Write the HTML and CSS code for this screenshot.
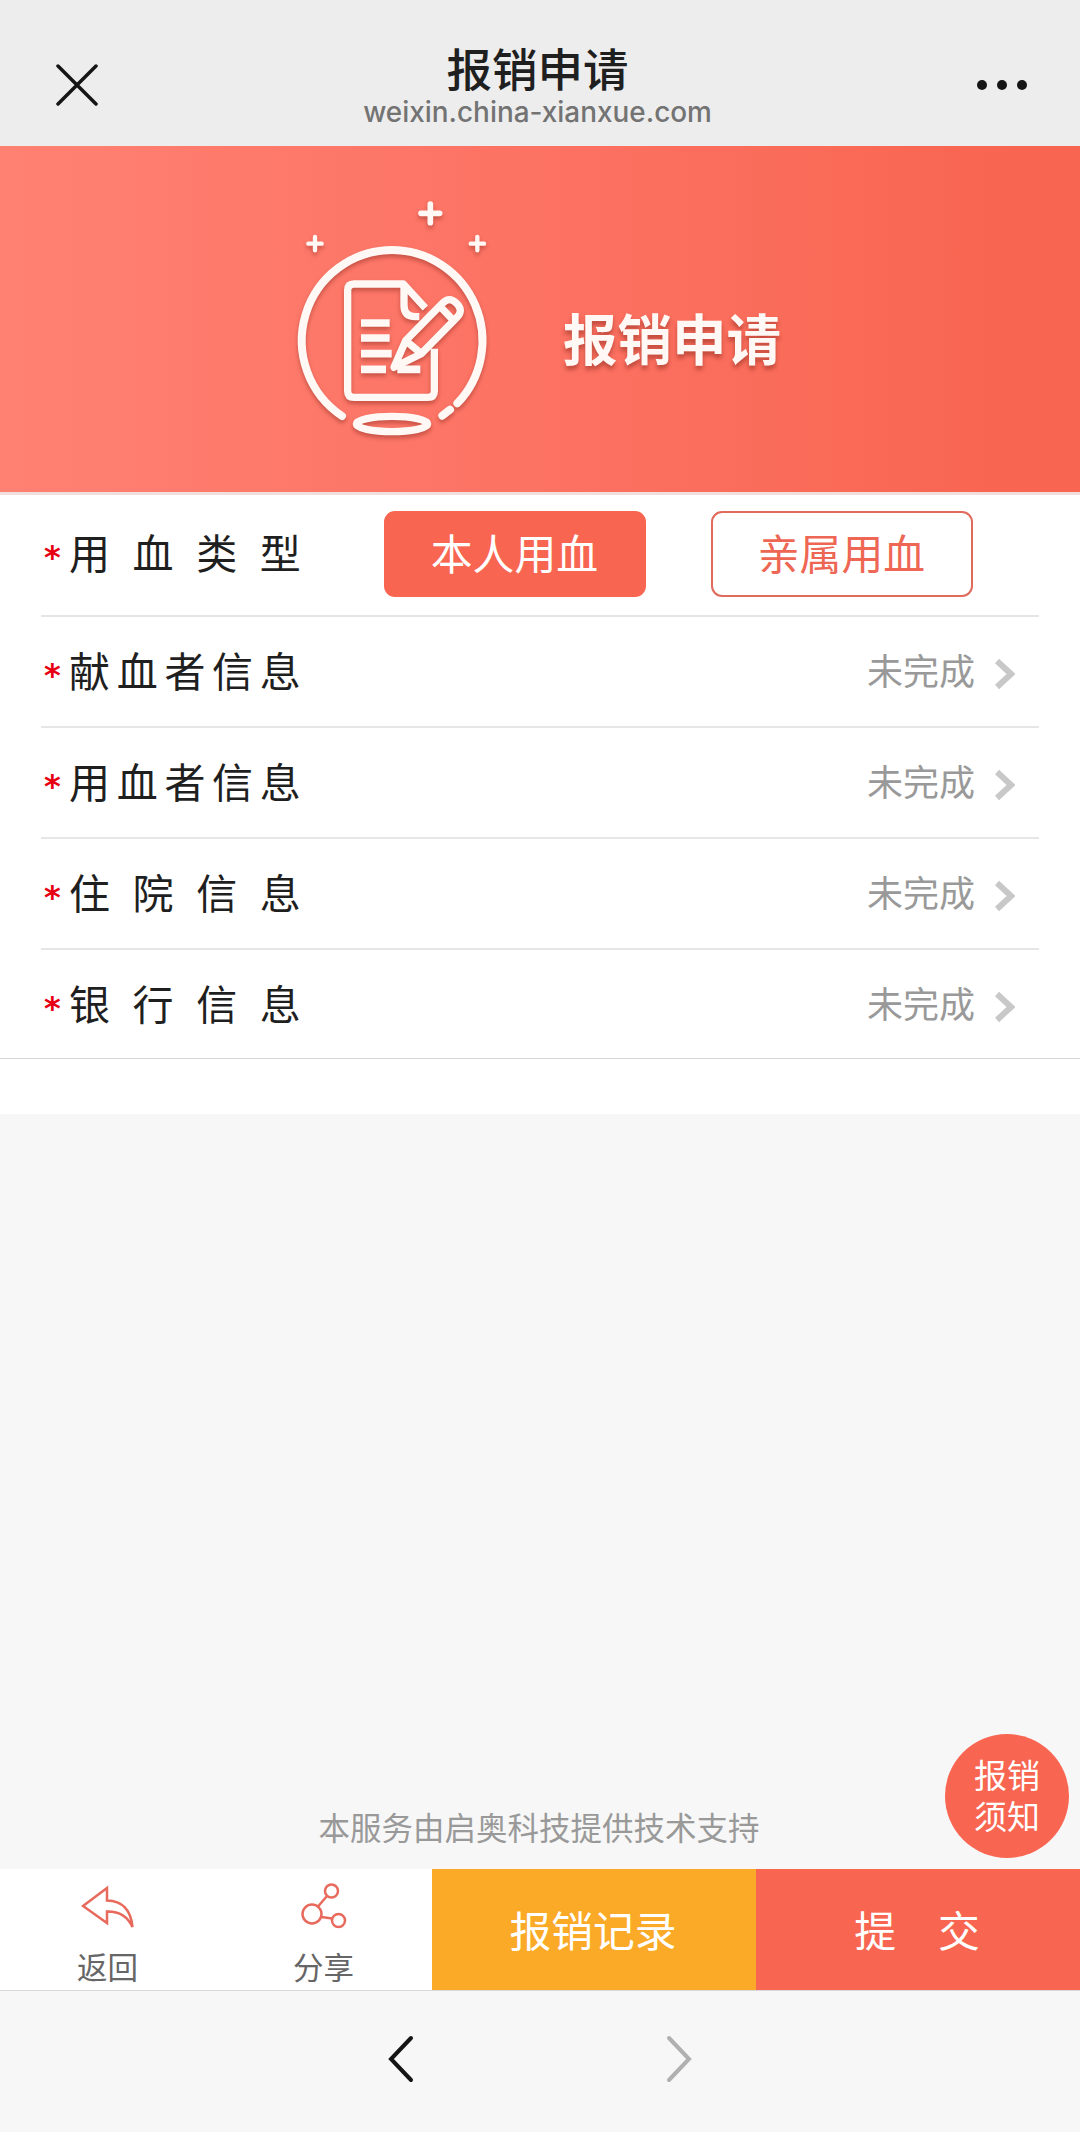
FILE: index.html
```html
<!DOCTYPE html>
<html lang="zh-CN">
<head>
  <meta charset="UTF-8">
  <meta name="viewport" content="width=device-width, initial-scale=1.0">
  <title>报销申请</title>
  <link rel="stylesheet" href="styles.css">
</head>
<body>

  <!-- Title bar -->
  <div class="header">
    <svg class="close" viewBox="0 0 42 42">
      <path d="M2 2L40 40M40 2L2 40"/>
    </svg>
    <div class="header-title">
      <h1>报销申请</h1>
      <p>weixin.china-xianxue.com</p>
    </div>
    <svg class="more" viewBox="0 0 50 12">
      <circle cx="5" cy="6" r="5"/>
      <circle cx="25" cy="6" r="5"/>
      <circle cx="45" cy="6" r="5"/>
    </svg>
  </div>

  <!-- Banner -->
  <div class="banner">
    <svg class="banner-icon" viewBox="0 0 690 840">
      <path class="plus" d="M451 72V128M423 100H479"/>
      <path class="plus small" d="M105 171V211M85 191H125M592 171V211M572 191H612"/>
      <path class="ring" d="M186 708A272 272 0 0 1 336 210A272 272 0 0 1 532 670M510 689L487 707"/>
      <ellipse class="base" cx="336" cy="732" rx="107" ry="23"/>
      <path class="paper" d="M436 384L370 312H222Q203 312 203 331V633Q203 652 222 652H444Q463 652 463 633V506M372 316V376Q372 410 406 410H418"/>
      <path class="lines" d="M243 429H329M243 474H329M243 521H335M243 568H318M352 568H421"/>
      <path class="pencil" d="M342 562L377 482L487 370Q508 348 530 370Q552 392 530 413L424 521ZM377 482L424 521M479 378L521 422"/>
    </svg>
    <h2>报销申请</h2>
  </div>

  <!-- Application items -->
  <div class="form-list">
    <div class="item item-type">
      <span class="star">*</span>
      <span class="label label-4">用血类型</span>
      <div class="types">
        <button class="type active">本人用血</button>
        <button class="type">亲属用血</button>
      </div>
    </div>
    <div class="item">
      <span class="star">*</span>
      <span class="label label-5">献血者信息</span>
      <span class="status">未完成</span>
      <svg class="arrow" viewBox="0 0 20 32"><path d="M2 3L16 16L2 29"/></svg>
    </div>
    <div class="item">
      <span class="star">*</span>
      <span class="label label-5">用血者信息</span>
      <span class="status">未完成</span>
      <svg class="arrow" viewBox="0 0 20 32"><path d="M2 3L16 16L2 29"/></svg>
    </div>
    <div class="item">
      <span class="star">*</span>
      <span class="label label-4">住院信息</span>
      <span class="status">未完成</span>
      <svg class="arrow" viewBox="0 0 20 32"><path d="M2 3L16 16L2 29"/></svg>
    </div>
    <div class="item">
      <span class="star">*</span>
      <span class="label label-4">银行信息</span>
      <span class="status">未完成</span>
      <svg class="arrow" viewBox="0 0 20 32"><path d="M2 3L16 16L2 29"/></svg>
    </div>
  </div>
  <div class="form-end"></div>

  <div class="content">
    <p class="support">本服务由启奥科技提供技术支持</p>
    <button class="notice">报销<br>须知</button>
  </div>

  <!-- Bottom actions -->
  <div class="tabbar">
    <a class="tab">
      <svg viewBox="0 0 54 50">
        <path d="M2 23L26 5V17.500Q49 18 51.500 44Q44 28 26 28.500V40Z"/>
      </svg>
      <span>返回</span>
    </a>
    <a class="tab">
      <svg viewBox="0 0 54 50">
        <circle cx="15" cy="31" r="9.500"/>
        <circle cx="34.500" cy="8" r="6.500"/>
        <circle cx="41.500" cy="37.500" r="6.500"/>
        <path d="M21 23.500L30 13M24.500 34L35 35.500"/>
      </svg>
      <span>分享</span>
    </a>
    <button class="record">报销记录</button>
    <button class="submit">提　交</button>
  </div>

  <!-- Browser navigation -->
  <div class="nav">
    <svg class="prev" viewBox="0 0 28 50"><path d="M24 4L4 25L24 46"/></svg>
    <svg class="next" viewBox="0 0 28 50"><path d="M4 4L24 25L4 46"/></svg>
  </div>

</body>
</html>
```
FILE: styles.css
```css
* {
  box-sizing: border-box;
}

body {
  display: flex;
  flex-direction: column;
  height: 2132px;
  margin: 0;
  background-color: #f7f7f7;
  color: #1f1f1f;
  font-family: "Noto Sans CJK SC", sans-serif;
}

h1, h2, p {
  margin: 0;
}

button {
  padding: 0;
  border: none;
  font-family: inherit;
  cursor: pointer;
}

svg {
  display: block;
  flex: none;
  fill: none;
}

/* Title bar */
.header {
  display: flex;
  justify-content: space-between;
  height: 146px;
  padding: 37px 53px 0 56px;
  background-color: #ededed;
}

.close {
  width: 42px;
  height: 42px;
  margin-top: 27px;
  stroke: #151515;
  stroke-width: 3.5;
  stroke-linecap: round;
}

.header-title {
  text-align: center;
}

.header-title h1 {
  font-size: 45.500px;
  font-weight: 500;
  line-height: 60px;
}

.header-title p {
  color: #737373;
  font-family: Inter, sans-serif;
  font-size: 27.900px;
  font-weight: 500;
  line-height: 30px;
}

.more {
  width: 50px;
  height: 12px;
  margin-top: 42px;
  fill: #151515;
}

/* Banner */
.banner {
  display: flex;
  align-items: center;
  height: 349px;
  padding-left: 280px;
  border-bottom: 3px solid #f0dfdd;
  background: linear-gradient(to right, #ff8172, #fc7263 50%, #f86550 95%);
}

.banner-icon {
  width: 230px;
  height: 280px;
  margin-top: 2px;
  stroke: #fff8f5;
  filter: drop-shadow(0 3px 2px rgba(120, 30, 20, 0.4));
}

.plus {
  stroke-width: 17;
  stroke-linecap: round;
}

.small {
  stroke-width: 13;
}

.ring {
  stroke-width: 24;
  stroke-linecap: round;
}

.base {
  stroke-width: 22;
}

.paper, .pencil {
  stroke-width: 22;
  stroke-linejoin: round;
}

.lines {
  stroke-width: 23;
}

.banner h2 {
  margin: 36px 0 0 53px;
  color: #fff8f5;
  font-size: 54.500px;
  font-weight: 700;
  line-height: 80px;
  text-shadow: 0 4px 4px rgba(120, 30, 20, 0.45);
}

/* Application items */
.form-list {
  height: 564px;
  padding: 0 41px;
  border-bottom: 1px solid #d8d8d8;
  background-color: #fff;
}

.item {
  display: flex;
  align-items: center;
  height: 111px;
  padding: 0 24px 0 3px;
  border-bottom: 2px solid #e6e6e6;
}

.item-type {
  height: 122px;
  padding-bottom: 3px;
}

.item:last-child {
  height: 109px;
  border-bottom: none;
}

.star {
  width: 25px;
  padding-top: 6px;
  color: #e60012;
  font-family: "DejaVu Sans", sans-serif;
  font-size: 32px;
  font-weight: 700;
  line-height: 40px;
}

.label {
  padding-bottom: 6px;
  font-size: 41px;
  line-height: 60px;
}

.label-4 {
  letter-spacing: 22.600px;
}

.label-5 {
  letter-spacing: 6.700px;
}

.types {
  display: flex;
  gap: 65px;
  margin-left: 61px;
}

.type {
  width: 262px;
  height: 86px;
  padding: 0 2px 4px 0;
  border: 2px solid #e06a5c;
  border-radius: 11px;
  background-color: #fff;
  color: #ee6654;
  font-size: 41.800px;
}

.type.active {
  border-color: #f86550;
  background-color: #f86550;
  color: #fff;
}

.status {
  margin-left: auto;
  padding-bottom: 5px;
  color: #999;
  font-size: 36px;
  line-height: 50px;
}

.arrow {
  width: 20px;
  height: 32px;
  margin: 4px 0 0 20px;
  stroke: #c8c8c8;
  stroke-width: 6;
}

.form-end {
  height: 55px;
  background-color: #fff;
}

/* Support text and floating notice button */
.content {
  position: relative;
  display: flex;
  flex: 1;
  align-items: flex-end;
  justify-content: center;
}

.support {
  padding: 0 2px 20px 0;
  color: #999;
  font-size: 31.500px;
  line-height: 46px;
}

.notice {
  position: absolute;
  right: 11px;
  bottom: 11px;
  width: 124px;
  height: 124px;
  padding-bottom: 3px;
  border-radius: 50%;
  background-color: #f86550;
  color: #fff;
  font-size: 33px;
  line-height: 41px;
}

/* Bottom actions */
.tabbar {
  display: grid;
  grid-template-columns: 216px 216px 324px 324px;
  height: 122px;
  border-bottom: 1px solid #d8d8d8;
  background-color: #fff;
}

.tab {
  display: flex;
  flex-direction: column;
  align-items: center;
  padding: 14px 1px 0 0;
  color: #666;
  font-size: 30.500px;
  line-height: 44px;
}

.tab svg {
  width: 54px;
  height: 50px;
  margin-bottom: 11px;
  stroke: #e86a5c;
  stroke-width: 2.5;
}

.record, .submit {
  padding: 0 2px 2px 0;
  color: #fff;
  font-size: 41.800px;
}

.record {
  background-color: #fbaa27;
}

.submit {
  background-color: #f86550;
}

/* Browser navigation */
.nav {
  display: flex;
  gap: 250px;
  height: 141px;
  padding: 43px 0 0 387px;
}

.nav svg {
  width: 28px;
  height: 50px;
  stroke-width: 4;
  stroke-linecap: round;
}

.prev {
  stroke: #151515;
}

.next {
  stroke: #b0b0b0;
}
```
